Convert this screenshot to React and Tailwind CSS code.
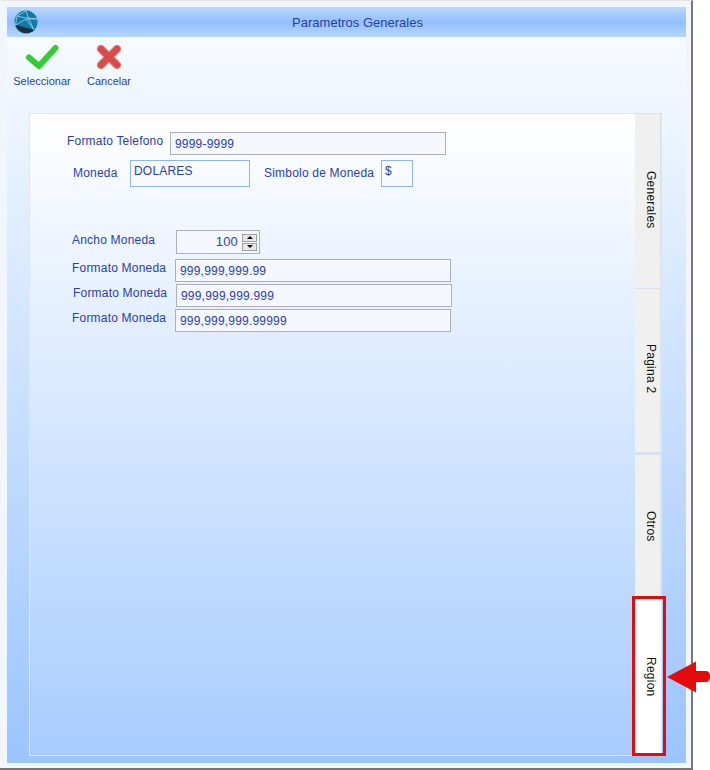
import React from 'react'

function Field({ value, className = '' }) {
  return (
    <div className={`flex h-[23px] w-[276px] items-center border border-[#aeb0b6] bg-[#f4f7fe] pl-[4px] pb-[1px] pt-[2px] text-[12px] tracking-[0.2px] text-[#2b3fa8] ${className}`}>
      {value}
    </div>
  )
}

function Tab({ label, className = '' }) {
  return (
    <div className={`flex w-[26px] items-center justify-center border-t border-r border-[#dcdfe4] bg-[#f0f0f0] pl-[6px] text-[12px] tracking-[0.25px] text-[#111] [writing-mode:vertical-rl] ${className}`}>
      {label}
    </div>
  )
}

function Globe() {
  return (
    <svg width="24" height="24" viewBox="0 0 24 24">
      <circle cx="12" cy="12" r="11.5" fill="#0e7aa6" />
      <path d="M1.5 15 C7 16 14 19 21 19.5 C16 25 5 24.5 1.5 15Z" fill="#232c3a" />
      <path d="M3 6 L12 1 M12 1 C14 8 17 13 20 20 M3 6 C9 8 16 8 23 9 M3 6 L1.5 15 L12 9 L20 20 M12 9 L23 9" fill="none" stroke="#a9d3e6" strokeWidth="0.8" />
    </svg>
  )
}

function CheckIcon() {
  return (
    <svg className="shrink-0" width="34" height="26" viewBox="0 0 34 26">
      <path d="M4 13.5 L14 22 L30.5 4" fill="none" stroke="#33cc33" strokeWidth="6" strokeLinecap="round" strokeLinejoin="round" />
    </svg>
  )
}

function CrossIcon() {
  return (
    <svg className="shrink-0" width="26" height="26" viewBox="0 0 26 26">
      <path d="M5 5 L21 21 M21 5 L5 21" fill="none" stroke="#d99a9a" strokeWidth="8.5" strokeLinecap="round" />
      <path d="M5 5 L21 21 M21 5 L5 21" fill="none" stroke="#d94b4b" strokeWidth="6.5" strokeLinecap="round" />
    </svg>
  )
}

function Spinner() {
  return (
    <div className="flex h-[24px] w-[84px] items-center justify-between border border-[#aeb0b6] bg-[#f4f7fe] pl-[2px] pr-[2px] text-[#2b3fa8]">
      <span className="flex-1 pr-[4px] text-right text-[13px]">100</span>
      <div className="flex w-[15px] flex-col gap-px">
        <div className="flex h-[8px] items-center justify-center border border-[#a0a0a0] bg-[#e8e8e8]">
          <div className="border-x-[3px] border-b-[3px] border-x-transparent border-b-black" />
        </div>
        <div className="flex h-[8px] items-center justify-center border border-[#a0a0a0] bg-[#e8e8e8]">
          <div className="border-x-[3px] border-t-[3px] border-x-transparent border-t-black" />
        </div>
      </div>
    </div>
  )
}

export default function App() {
  return (
    <div className="relative h-[770px] w-[710px] overflow-hidden bg-white font-['Liberation_Sans',Arial,sans-serif]">
      {/* ventana */}
      <div className="h-[770px] w-[693px] border-t border-r-2 border-b-2 border-t-[#e4e4e4] border-r-[#777] border-b-[#777] bg-[#f1f5fc] pt-[6px] pr-[5px] pb-[5px] pl-[7px]">
        <div className="flex h-[756px] flex-col bg-gradient-to-b from-[#fbfdff] to-[#9bc4ff]">
          <div className="relative flex h-[30px] shrink-0 items-center justify-center bg-gradient-to-b from-[#b9d7ff] via-[#93bffb] to-[#b6d6ff] pl-[22px] pt-[1px] text-[13px] text-[#2740a0]">
            <div className="absolute left-[7px] top-[3px]">
              <Globe />
            </div>
            Parametros Generales
          </div>

          <div className="flex h-[76px] shrink-0 text-[11px] text-[#2b3fa8]">
            <div className="ml-[6px] flex w-[58px] flex-col items-center pt-[7px]">
              <CheckIcon />
              <span className="mt-[3px]">Seleccionar</span>
            </div>
            <div className="ml-[16px] flex w-[44px] flex-col items-center pt-[7px]">
              <CrossIcon />
              <span className="mt-[3px]">Cancelar</span>
            </div>
          </div>

          {/* panel */}
          <div className="ml-[22px] flex h-[643px] w-[633px] border border-[#e2e6ee] bg-gradient-to-b from-white to-[#a8ccff]">
            <div className="flex w-[605px] flex-col pt-[18px] text-[12px] tracking-[0.2px] text-[#2b3fa8]">
              <div className="flex h-[24px]">
                <span className="ml-[37px] w-[103px]">Formato Telefono</span>
                <Field value="9999-9999" />
              </div>
              <div className="mt-[4px] flex h-[27px]">
                <span className="ml-[43px] mt-[4px] w-[57px]">Moneda</span>
                <div className="h-[27px] w-[120px] border border-[#8fb6ea] pl-[3px] pt-[1px] text-[12px]">DOLARES</div>
                <span className="ml-[14px] mt-[4px] w-[117px]">Simbolo de Moneda</span>
                <div className="h-[27px] w-[32px] border border-[#8fb6ea] pl-[3px] pt-[1px] text-[12px]">$</div>
              </div>
              <div className="mt-[43px] flex h-[24px]">
                <span className="ml-[42px] mt-[1px] w-[104px]">Ancho Moneda</span>
                <Spinner />
              </div>
              <div className="mt-[5px] flex h-[23px]">
                <span className="ml-[42px] w-[103px]">Formato Moneda</span>
                <Field value="999,999,999.99" />
              </div>
              <div className="mt-[2px] flex h-[23px]">
                <span className="ml-[43px] w-[103px]">Formato Moneda</span>
                <Field value="999,999,999.999" />
              </div>
              <div className="mt-[2px] flex h-[23px]">
                <span className="ml-[42px] w-[103px]">Formato Moneda</span>
                <Field value="999,999,999.99999" />
              </div>
            </div>

            <div className="-mt-px flex flex-col">
              <Tab label="Generales" className="h-[173px]" />
              <Tab label="Pagina 2" className="mt-[2px] h-[164px] pb-[3px]" />
              <Tab label="Otros" className="mt-[2px] h-[143px]" />
              <div className="flex h-[158px] w-[26px] items-center justify-center bg-white pl-[6px] pt-[2px] text-[12px] tracking-[0.25px] text-[#111] [writing-mode:vertical-rl]">
                Region
              </div>
            </div>
          </div>
        </div>
      </div>

      {/* anotacion roja */}
      <div className="absolute left-[632px] top-[596px] h-[160px] w-[34px] border-[3px] border-[#e60b0b]" />
      <svg className="absolute left-[666px] top-[661px]" width="44" height="32" viewBox="0 0 44 32">
        <path d="M1 16 L30 0.5 V10 H40 C45.5 10 45.5 21 40 21 H30 V31.5 Z" fill="#e60b0b" />
      </svg>
    </div>
  )
}
